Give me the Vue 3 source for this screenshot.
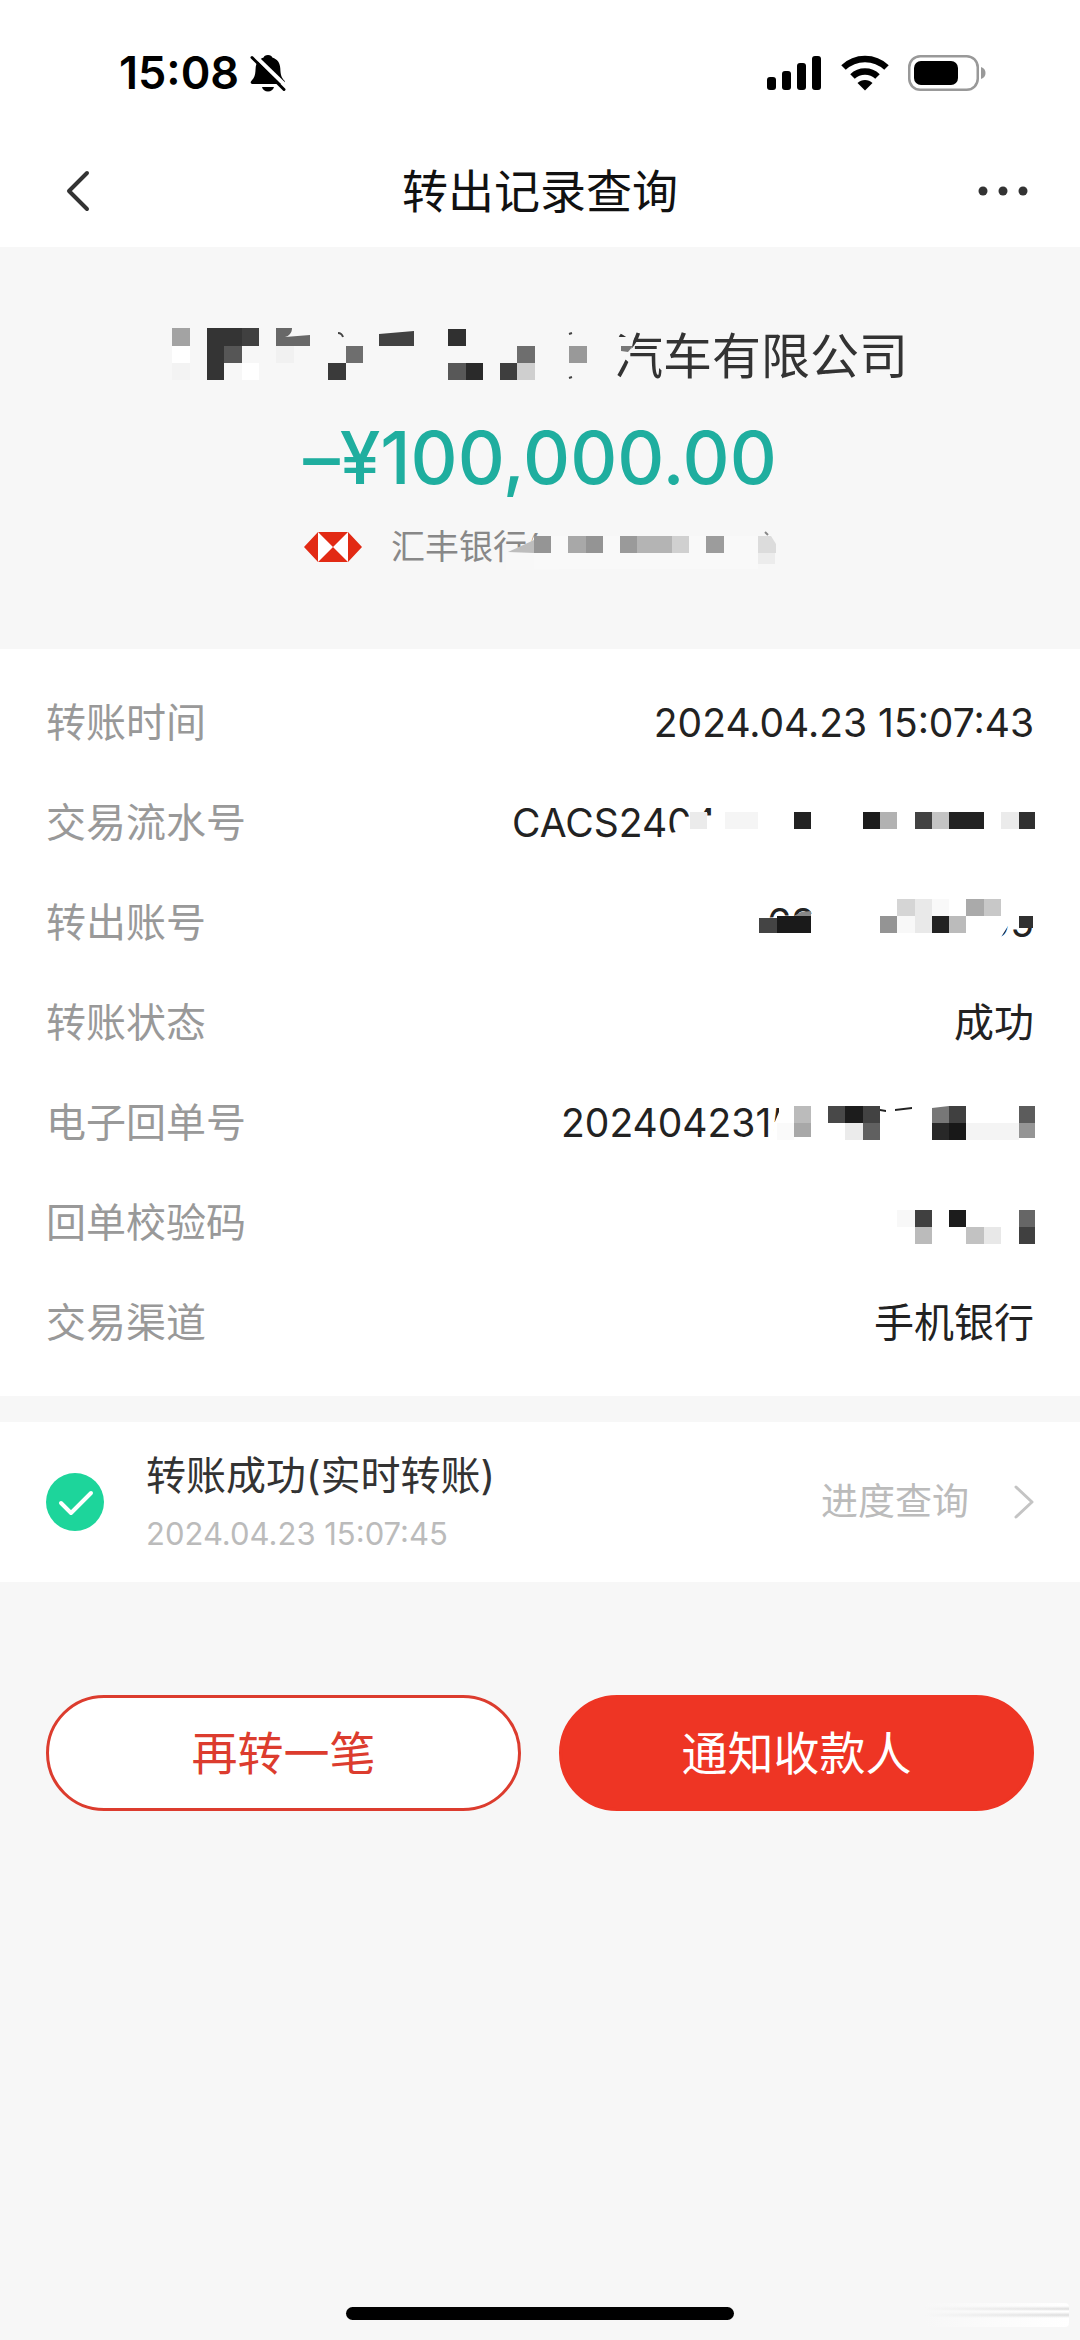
<script setup>
// Mosaic cells: [x, y, width, height, colour]
const companyCells = [
  [172, 328, 18, 18, '#a3a3a3'], [207, 328, 35, 18, '#343434'], [242, 328, 17, 18, '#404040'],
  [448, 329, 18, 17, '#303030'],
  [172, 346, 18, 17, '#fff'], [207, 346, 17, 34, '#343434'], [224, 346, 18, 17, '#565656'],
  [276, 346, 18, 17, '#f1f1f1'], [346, 346, 17, 17, '#6e6e6e'], [517, 346, 18, 17, '#6e6e6e'],
  [569, 346, 18, 17, '#999'],
  [172, 363, 18, 17, '#f3f3f3'], [242, 363, 17, 17, '#fff'], [328, 363, 18, 17, '#3a3a3a'],
  [448, 363, 18, 17, '#585858'], [466, 363, 17, 17, '#2a2a2a'], [500, 363, 17, 17, '#3e3e3e'],
  [517, 363, 18, 17, '#cfcfcf'],
]
const bankCells = [
  [535, 536, 17, 17, '#959595'], [569, 536, 18, 17, '#a8a8a8'], [587, 536, 17, 17, '#949494'],
  [621, 536, 17, 17, '#9a9a9a'], [638, 536, 35, 17, '#b4b4b4'], [673, 536, 17, 17, '#d0d0d0'],
  [707, 536, 18, 17, '#9c9c9c'], [759, 553, 17, 11, '#ececec'],
]
const rows = [
  { label: '转账时间', value: '2024.04.23 15:07:43', numeric: true },
  {
    label: '交易流水号', parts: ['CACS2404'], width: 522, top: 773,
    cover: '670,833 682,831 684,817 694,816 722,815 740,800 740,850 670,850',
    cells: [
      [690, 812, 17, 17, '#ebebeb'], [725, 812, 33, 17, '#f5f5f5'], [794, 812, 17, 17, '#222'],
      [863, 812, 17, 17, '#1c1c1c'], [880, 812, 17, 17, '#b2b2b2'], [915, 812, 17, 17, '#424242'],
      [932, 812, 17, 17, '#c4c4c4'], [949, 812, 35, 17, '#222'], [1001, 812, 18, 17, '#ebebeb'],
      [1019, 812, 16, 17, '#303030'],
    ],
  },
  {
    label: '转出账号', parts: ['62', '95'], width: 267, top: 873,
    cover: '760,918 794,916 811,914 840,890 1040,890 1040,928 1008,926 998,942 850,945 760,945',
    cells: [
      [897, 899, 18, 17, '#d5d5d5'], [915, 899, 17, 34, '#e9e9e9'], [932, 899, 17, 17, '#f9f9f9'],
      [966, 899, 18, 17, '#aaa'], [984, 899, 17, 17, '#c8c8c8'],
      [759, 918, 18, 15, '#444'], [777, 916, 34, 17, '#1a1a1a'], [880, 916, 17, 17, '#949494'],
      [897, 916, 18, 17, '#f8f8f8'], [932, 916, 17, 17, '#222'], [949, 916, 17, 17, '#bbb'],
      [1019, 916, 14, 12, '#303030'],
    ],
    shapes: [['794,916 801,912 811,911 811,916', '#888']],
  },
  { label: '转账状态', value: '成功' },
  {
    label: '电子回单号', parts: ['2024042315'], width: 473, top: 1073,
    cover: '779,1100 779,1112 774,1124 772,1145 815,1145 815,1100',
    cells: [
      [794, 1106, 17, 17, '#bbb'], [828, 1106, 17, 17, '#484848'], [845, 1106, 18, 17, '#1c1c1c'],
      [863, 1106, 17, 17, '#424242'], [932, 1106, 17, 17, '#777'], [949, 1106, 17, 17, '#404040'],
      [1019, 1106, 16, 17, '#5c5c5c'],
      [777, 1123, 17, 17, '#fafafa'], [794, 1123, 17, 14, '#a8a8a8'], [845, 1123, 18, 17, '#ebebeb'],
      [863, 1123, 17, 17, '#606060'], [932, 1123, 17, 17, '#282828'], [949, 1123, 17, 17, '#181818'],
      [966, 1123, 53, 17, '#f4f4f4'], [1019, 1123, 16, 15, '#959595'],
    ],
    shapes: [
      ['880,1109 886,1110 886,1112 880,1111', '#222'], ['895,1109 912,1107 912,1109 895,1111', '#222'],
      ['930,1104 949,1104 949,1106 932,1108', '#fff'],
    ],
  },
  {
    label: '回单校验码', parts: [], width: 137, top: 1173,
    cells: [
      [897, 1210, 18, 17, '#f8f8f8'], [915, 1210, 17, 17, '#404040'], [949, 1210, 17, 17, '#1c1c1c'],
      [1019, 1210, 16, 17, '#666'],
      [915, 1227, 17, 17, '#bbb'], [966, 1227, 18, 17, '#c2c2c2'], [984, 1227, 17, 17, '#e8e8e8'],
      [1019, 1227, 16, 17, '#404040'],
    ],
  },
  { label: '交易渠道', value: '手机银行' },
]
</script>

<template>
  <div class="page">
    <div class="status">
      <div class="clock">
        <span>15:08</span>
        <svg width="36" height="38" viewBox="0 0 36 38" aria-hidden="true">
          <path d="M18 1c2.500 0 3.800 1 4.300 2.500 5.300 1.700 7.700 5.500 8 11 .3 7 1.200 9 4 12 1.300 2 .6 3.500-1.300 3.500H2.500C.5 30 .2 28.500 1.300 27c3-3.500 4-5 4.300-12.500.3-5.500 2.800-9.300 8-11C14 2 15.500 1 18 1z" />
          <path d="M12 33h12c-.8 2.800-3 4.500-6 4.500s-5.300-1.700-6-4.500z" />
          <path d="M4 1 36 32" stroke="#fff" stroke-width="4" />
          <path d="M2 3.500 34 35.500" stroke="#000" stroke-width="3" stroke-linecap="round" />
        </svg>
      </div>
      <div class="indicators">
        <svg width="55" height="36" viewBox="0 0 55 36" aria-hidden="true">
          <rect x="0" y="22" width="9" height="13" rx="3" />
          <rect x="15" y="16" width="9" height="19" rx="3" />
          <rect x="30" y="8" width="9" height="27" rx="3" />
          <rect x="45" y="1" width="9" height="34" rx="3" />
        </svg>
        <svg width="48" height="36" viewBox="0 0 48 36" aria-hidden="true">
          <path d="M24 35.500 16.500 28c4-4 11-4 15 0z" />
          <path d="M11.500 21.500c7-6.700 18-6.700 25 0" fill="none" stroke="#000" stroke-width="6.500" />
          <path d="M2.500 12.500c12-11.500 31-11.500 43 0" fill="none" stroke="#000" stroke-width="6.500" />
        </svg>
        <svg width="79" height="36" viewBox="0 0 79 36" aria-hidden="true">
          <rect x="1.250" y="1.250" width="68.500" height="33.500" rx="11" fill="none" stroke="#999" stroke-width="2.500" />
          <rect x="6" y="6" width="44" height="24" rx="7" />
          <path d="M73 12c6 1.500 6 10.500 0 12z" fill="#999" />
        </svg>
      </div>
    </div>

    <header class="nav">
      <button class="icon-button" aria-label="返回">
        <svg width="26" height="42" viewBox="0 0 26 42" fill="none" aria-hidden="true">
          <path d="M23 3 5 21l18 18" stroke="#333" stroke-width="4" stroke-linecap="round" stroke-linejoin="round" />
        </svg>
      </button>
      <h1>转出记录查询</h1>
      <button class="icon-button" aria-label="更多">
        <svg width="52" height="12" viewBox="0 0 52 12" fill="#333" aria-hidden="true">
          <circle cx="6" cy="6" r="4.500" /><circle cx="26" cy="6" r="4.500" /><circle cx="46" cy="6" r="4.500" />
        </svg>
      </button>
    </header>

    <section class="summary">
      <div class="company">
        <span>汽车有限公司</span>
        <svg class="mask" width="736" height="68" viewBox="172 323 736 68" aria-hidden="true">
          <polygon points="611,337 634,337 631,352 624,361 610,361" fill="#f7f7f7" />
          <polygon points="621,346 633,346 628,352 621,351" fill="#777" />
          <rect v-for="(c, i) in companyCells" :key="i" :x="c[0]" :y="c[1]" :width="c[2]" :height="c[3]" :fill="c[4]" />
          <path d="M276 328h16c0 5-3 8-7 9l25-2v11h-34z" fill="#686868" />
          <polygon points="379,334 414,331 414,346 379,346" fill="#424242" />
          <path d="M338 333c3 0 4 1 5 4M569 334l3-1M569 378l3-1" fill="none" stroke="#444" stroke-width="2" />
        </svg>
      </div>
      <p class="amount">–¥100,000.00</p>
      <div class="bank">
        <svg width="58" height="30" viewBox="0 0 58 30" aria-hidden="true">
          <path d="M0 15 14 0v30zM58 15 44 0v30z" fill="#e22a14" />
          <path d="M14 0h30v30H14z" fill="#fff" />
          <path d="M14 0h30L29 15zM14 30h30L29 15z" fill="#e22a14" />
        </svg>
        <span>汇丰银行(</span>
        <svg class="mask" width="472" height="50" viewBox="305 522 472 50" aria-hidden="true">
          <polygon points="507,554 533,541 535,536 560,536 560,570 507,570" fill="#f8f8f8" />
          <rect x="535" y="536" width="224" height="33" fill="#f9f9f9" />
          <polygon points="509,552 535,540 535,553" fill="#bdbdbd" />
          <rect v-for="(c, i) in bankCells" :key="i" :x="c[0]" :y="c[1]" :width="c[2]" :height="c[3]" :fill="c[4]" />
          <polygon points="759,536 772,536 777,544 777,553 759,553" fill="#dcdcdc" />
          <path d="M766 532l3 3" stroke="#888" stroke-width="2" />
        </svg>
      </div>
    </section>

    <dl class="details">
      <div v-for="row in rows" :key="row.label" class="row">
        <dt>{{ row.label }}</dt>
        <dd v-if="row.value" :class="{ numeric: row.numeric }">{{ row.value }}</dd>
        <dd v-else class="masked numeric" :style="{ width: row.width + 'px' }">
          <span v-for="part in row.parts" :key="part">{{ part }}</span>
        </dd>
        <svg v-if="row.cells" class="mask" width="560" height="100" :viewBox="`474 ${row.top} 560 100`" aria-hidden="true">
          <polygon v-if="row.cover" :points="row.cover" fill="#fff" />
          <rect v-for="(c, i) in row.cells" :key="i" :x="c[0]" :y="c[1]" :width="c[2]" :height="c[3]" :fill="c[4]" />
          <polygon v-for="s in row.shapes" :key="s[0]" :points="s[0]" :fill="s[1]" />
        </svg>
      </div>
    </dl>

    <section class="progress">
      <svg width="58" height="58" viewBox="0 0 58 58" fill="none" aria-hidden="true">
        <circle cx="29" cy="29" r="29" fill="#1dd59b" />
        <path d="m15 30 10 10 20-20" stroke="#fff" stroke-width="4" stroke-linecap="round" stroke-linejoin="round" />
      </svg>
      <div class="result">
        <p class="title">转账成功(实时转账)</p>
        <p class="time">2024.04.23 15:07:45</p>
      </div>
      <a class="track" href="#">
        进度查询
        <svg width="20" height="34" viewBox="0 0 20 34" fill="none" aria-hidden="true">
          <path d="m2 2 16 15L2 32" stroke="#c4c4c4" stroke-width="3" stroke-linecap="round" stroke-linejoin="round" />
        </svg>
      </a>
    </section>

    <div class="actions">
      <button class="outline">再转一笔</button>
      <button class="solid">通知收款人</button>
    </div>

    <footer class="home">
      <div class="home-bar"></div>
      <div class="smear"></div>
    </footer>
  </div>
</template>

<style>
body {
  margin: 0;
  background: #f7f7f7;
}
</style>

<style scoped>
.page {
  min-height: 100vh;
  display: flex;
  flex-direction: column;
  background: #f7f7f7;
  color: #222;
  font-family: Inter, "Noto Sans CJK SC", sans-serif;
  line-height: 60px;
}
p, h1, dl, dd {
  margin: 0;
}
button {
  font-family: inherit;
  line-height: inherit;
  cursor: pointer;
}
.status {
  display: flex;
  justify-content: space-between;
  align-items: center;
  height: 146px;
  padding: 0 93px 0 119px;
  background: #fff;
}
.clock {
  display: flex;
  align-items: center;
  gap: 11px;
  font-size: 45px;
  font-weight: 600;
  color: #000;
}
.indicators {
  display: flex;
  align-items: center;
  gap: 19px;
}
.nav {
  display: flex;
  justify-content: space-between;
  align-items: center;
  height: 89px;
  padding: 0 51px 12px;
  background: #fff;
}
.icon-button {
  display: flex;
  justify-content: center;
  width: 52px;
  padding: 0;
  border: 0;
  background: none;
}
.nav h1 {
  font-size: 46px;
  font-weight: 400;
  color: #111;
}
.summary {
  display: flex;
  flex-direction: column;
  align-items: center;
  padding: 76px 0 77px;
}
.company {
  position: relative;
  width: 736px;
  line-height: 68px;
  text-align: right;
  font-size: 49px;
  color: #333;
}
.mask {
  position: absolute;
  top: 0;
  right: 0;
  overflow: visible;
}
.amount {
  margin: 22px 0 19px;
  line-height: 90px;
  font-size: 73px;
  font-weight: 500;
  font-variant-ligatures: no-contextual;
  color: #1fae9f;
}
.bank {
  position: relative;
  display: flex;
  align-items: center;
  gap: 29px;
  width: 472px;
  line-height: 50px;
  font-size: 34px;
  color: #888;
}
.details {
  padding: 24px 46px 23px;
  background: #fff;
}
.row {
  position: relative;
  display: flex;
  justify-content: space-between;
  align-items: center;
  height: 100px;
  font-size: 40px;
}
dt {
  color: #999;
}
.numeric {
  font-size: 39px;
}
.masked {
  display: flex;
  justify-content: space-between;
}
.progress {
  display: flex;
  align-items: center;
  height: 160px;
  margin-top: 26px;
  padding: 0 46px;
  background: #fff;
}
.result {
  flex: 1;
  margin-left: 42px;
  padding-top: 4px;
}
.title {
  font-size: 40px;
  color: #333;
}
.time {
  line-height: 56px;
  font-size: 31px;
  color: #bbb;
}
.track {
  display: flex;
  align-items: center;
  gap: 45px;
  font-size: 37px;
  color: #bbb;
  text-decoration: none;
}
.actions {
  display: flex;
  gap: 38px;
  padding: 113px 46px 0;
}
.actions button {
  flex: 1;
  height: 116px;
  border: 3px solid #dc3c2e;
  border-radius: 58px;
  font-size: 46px;
}
.outline {
  background: #fff;
  color: #dc3c2e;
}
.actions .solid {
  border-color: #ee3524;
  background: #ee3524;
  color: #fff;
}
.home {
  position: relative;
  margin-top: auto;
  padding-bottom: 20px;
}
.home-bar {
  width: 36%;
  height: 13px;
  margin: 0 auto;
  border-radius: 7px;
  background: #000;
}
.smear {
  position: absolute;
  right: 11px;
  bottom: 13px;
  width: 180px;
  height: 24px;
  border-radius: 4px;
  background:
    linear-gradient(90deg, #f7f7f7 20%, rgba(247, 247, 247, 0)),
    linear-gradient(#fff 0 3px, #ddd 6px, #fff 8px 9px, #ddd 12px, #fff 15px);
}
</style>
